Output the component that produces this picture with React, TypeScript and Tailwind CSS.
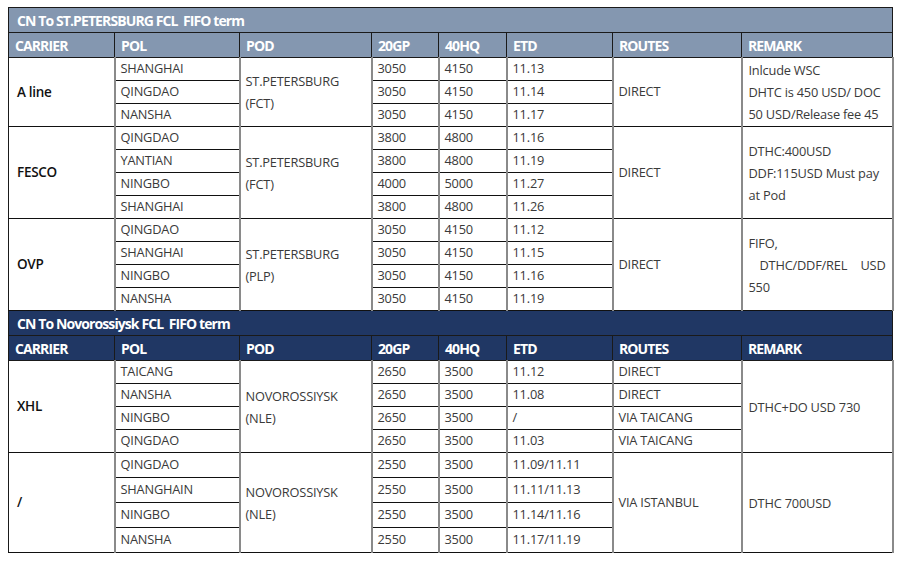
import React from "react";

type Group = {
  carrier: string;
  pod: string[];
  route?: string;
  remark: React.ReactNode;
  rows: { pol: string; gp: string; hq: string; etd: string; route?: string }[];
  rowH: string;
};

const section1: Group[] = [
  {
    carrier: "A line",
    pod: ["ST.PETERSBURG", "(FCT)"],
    route: "DIRECT",
    remark: (
      <>
        <div>Inlcude WSC</div>
        <div>DHTC is 450 USD/ DOC</div>
        <div>50 USD/Release fee 45</div>
      </>
    ),
    rowH: "h-[23px]",
    rows: [
      { pol: "SHANGHAI", gp: "3050", hq: "4150", etd: "11.13" },
      { pol: "QINGDAO", gp: "3050", hq: "4150", etd: "11.14" },
      { pol: "NANSHA", gp: "3050", hq: "4150", etd: "11.17" },
    ],
  },
  {
    carrier: "FESCO",
    pod: ["ST.PETERSBURG", "(FCT)"],
    route: "DIRECT",
    remark: (
      <>
        <div>DTHC:400USD</div>
        <div>DDF:115USD Must pay</div>
        <div>at Pod</div>
      </>
    ),
    rowH: "h-[23px]",
    rows: [
      { pol: "QINGDAO", gp: "3800", hq: "4800", etd: "11.16" },
      { pol: "YANTIAN", gp: "3800", hq: "4800", etd: "11.19" },
      { pol: "NINGBO", gp: "4000", hq: "5000", etd: "11.27" },
      { pol: "SHANGHAI", gp: "3800", hq: "4800", etd: "11.26" },
    ],
  },
  {
    carrier: "OVP",
    pod: ["ST.PETERSBURG", "(PLP)"],
    route: "DIRECT",
    remark: (
      <>
        <div>FIFO,</div>
        <div className="flex justify-between pl-[11px] pr-[6px]">
          <span>DTHC/DDF/REL</span>
          <span>USD</span>
        </div>
        <div>550</div>
      </>
    ),
    rowH: "h-[23px]",
    rows: [
      { pol: "QINGDAO", gp: "3050", hq: "4150", etd: "11.12" },
      { pol: "SHANGHAI", gp: "3050", hq: "4150", etd: "11.15" },
      { pol: "NINGBO", gp: "3050", hq: "4150", etd: "11.16" },
      { pol: "NANSHA", gp: "3050", hq: "4150", etd: "11.19" },
    ],
  },
];

const section2: Group[] = [
  {
    carrier: "XHL",
    pod: ["NOVOROSSIYSK", "(NLE)"],
    remark: <div>DTHC+DO USD 730</div>,
    rowH: "h-[23px]",
    rows: [
      { pol: "TAICANG", gp: "2650", hq: "3500", etd: "11.12", route: "DIRECT" },
      { pol: "NANSHA", gp: "2650", hq: "3500", etd: "11.08", route: "DIRECT" },
      { pol: "NINGBO", gp: "2650", hq: "3500", etd: "/", route: "VIA TAICANG" },
      { pol: "QINGDAO", gp: "2650", hq: "3500", etd: "11.03", route: "VIA TAICANG" },
    ],
  },
  {
    carrier: "/",
    pod: ["NOVOROSSIYSK", "(NLE)"],
    route: "VIA ISTANBUL",
    remark: <div>DTHC 700USD</div>,
    rowH: "h-[25px]",
    rows: [
      { pol: "QINGDAO", gp: "2550", hq: "3500", etd: "11.09/11.11" },
      { pol: "SHANGHAIN", gp: "2550", hq: "3500", etd: "11.11/11.13" },
      { pol: "NINGBO", gp: "2550", hq: "3500", etd: "11.14/11.16" },
      { pol: "NANSHA", gp: "2550", hq: "3500", etd: "11.17/11.19" },
    ],
  },
];

const headers = ["CARRIER", "POL", "POD", "20GP", "40HQ", "ETD", "ROUTES", "REMARK"];

const td = "border-b border-b-[#111] border-r-2 border-r-[#8a8a8a] pl-[5px] py-0 align-middle whitespace-nowrap";

function SectionHead({ title, bg }: { title: string; bg: string }) {
  return (
    <>
      <tr className="h-[25px]">
        <td
          colSpan={8}
          className={`${bg} border border-[#1a1a1a] pl-[8px] text-[14px] font-bold tracking-[-0.9px] whitespace-pre text-white`}
        >
          {title}
        </td>
      </tr>
      <tr className="h-[25px]">
        {headers.map((h) => (
          <td
            key={h}
            className={`${bg} border border-[#1a1a1a] pl-[6px] text-[14px] font-bold tracking-[-0.9px] text-white`}
          >
            {h}
          </td>
        ))}
      </tr>
    </>
  );
}

function GroupRows({ g }: { g: Group }) {
  const n = g.rows.length;
  return (
    <>
      {g.rows.map((r, i) => (
        <tr key={r.pol + i} className={g.rowH}>
          {i === 0 && (
            <td rowSpan={n} className={`${td} border-l border-l-[#1a1a1a] pl-[8px] text-[13.5px] font-semibold tracking-[-0.3px] text-[#111]`}>
              {g.carrier}
            </td>
          )}
          <td className={td}>{r.pol}</td>
          {i === 0 && (
            <td rowSpan={n} className={`${td} leading-[22px]`}>
              {g.pod.map((p) => (
                <div key={p}>{p}</div>
              ))}
            </td>
          )}
          <td className={td}>{r.gp}</td>
          <td className={td}>{r.hq}</td>
          <td className={td}>{r.etd}</td>
          {g.route ? (
            i === 0 && (
              <td rowSpan={n} className={td}>
                {g.route}
              </td>
            )
          ) : (
            <td className={td}>{r.route}</td>
          )}
          {i === 0 && (
            <td rowSpan={n} className={`${td} pl-[6px] leading-[22px]`}>
              {g.remark}
            </td>
          )}
        </tr>
      ))}
    </>
  );
}

export default function App() {
  return (
    <div
      className="h-[567px] w-[898px] bg-white pl-[8px] pt-[7px] text-[12.8px] tracking-[-0.2px] text-[#3a3a3a]"
      style={{ fontFamily: '"Open Sans", "Noto Sans", sans-serif' }}
    >
      <table className="w-[884px] table-fixed border-collapse">
        <colgroup>
          <col className="w-[106px]" />
          <col className="w-[125px]" />
          <col className="w-[132px]" />
          <col className="w-[67px]" />
          <col className="w-[68px]" />
          <col className="w-[106px]" />
          <col className="w-[129px]" />
          <col className="w-[151px]" />
        </colgroup>
        <tbody>
          <SectionHead title="CN To ST.PETERSBURG FCL  FIFO term" bg="bg-[#8497b0]" />
          {section1.map((g) => (
            <GroupRows key={g.carrier} g={g} />
          ))}
          <SectionHead title="CN To Novorossiysk FCL  FIFO term" bg="bg-[#203764]" />
          {section2.map((g) => (
            <GroupRows key={g.carrier} g={g} />
          ))}
        </tbody>
      </table>
    </div>
  );
}
